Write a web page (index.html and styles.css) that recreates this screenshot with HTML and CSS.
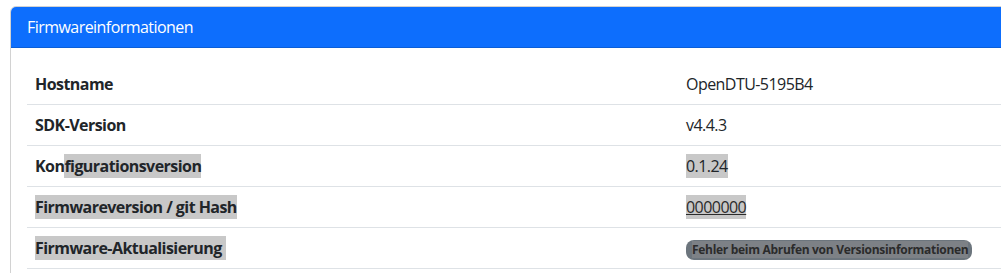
FILE: index.html
```html
<!DOCTYPE html>
<html lang="de">
<head>
    <meta charset="UTF-8">
    <meta name="viewport" content="width=device-width, initial-scale=1.0">
    <title>Firmwareinformationen</title>
    <link rel="stylesheet" href="styles.css">
</head>
<body>
    <div class="card">
        <div class="card-header">Firmwareinformationen</div>
        <div class="card-body">
            <table class="info-table">
                <tbody>
                    <tr>
                        <th>Hostname</th>
                        <td>OpenDTU-5195B4</td>
                    </tr>
                    <tr>
                        <th>SDK-Version</th>
                        <td>v4.4.3</td>
                    </tr>
                    <tr>
                        <th>Kon<span class="sel">figurationsversion</span></th>
                        <td><span class="sel">0.1.24</span></td>
                    </tr>
                    <tr>
                        <th><span class="sel">Firmwareversion / git Hash</span></th>
                        <td><span class="sel"><a href="#" class="hash">0000000</a></span></td>
                    </tr>
                    <tr>
                        <th><span class="sel wide">Firmware-Aktualisierung</span></th>
                        <td><span class="badge"><span class="badge-sel">Fehler beim Abrufen von Versionsinformationen</span></span></td>
                    </tr>
                </tbody>
            </table>
        </div>
    </div>
</body>
</html>
```

FILE: styles.css
```css
body {
    font-family: "Open Sans", "Noto Sans", sans-serif;
    font-size: 16px;
    line-height: 24px;
    letter-spacing: -0.55px;
    color: #212529;
    background-color: #fff;
    margin: 0;
    overflow: hidden;
}

.card {
    margin: 6px 0 0 10px;
    width: 1010px;
    border: 1px solid rgba(0, 0, 0, 0.175);
    border-radius: 6px;
    overflow: hidden;
}

.card-header {
    background-color: #0d6efd;
    color: #fff;
    padding: 8px 16px;
    border-bottom: 1px solid #0b5ed7;
}

.card-body {
    padding: 16px;
}

.info-table {
    width: 100%;
    border-collapse: collapse;
}

.info-table th,
.info-table td {
    text-align: left;
    padding: 8px;
    border-bottom: 1px solid #dee2e6;
}

.info-table th {
    width: 635px;
    font-weight: 700;
}

.sel {
    display: inline-block;
    background-color: #c8c8c8;
}

.sel.wide {
    padding-right: 4px;
}

.hash {
    color: #2b2b2b;
    text-decoration: underline;
}

.badge {
    display: inline-block;
    background-color: #6c757d;
    border-radius: 8px;
    padding: 3px 4px 3px 6px;
    font-size: 12px;
    line-height: 14px;
    font-weight: 700;
    letter-spacing: -0.3px;
    vertical-align: middle;
}

.badge-sel {
    background-color: #7d8186;
    color: #2b2b2b;
}
```
